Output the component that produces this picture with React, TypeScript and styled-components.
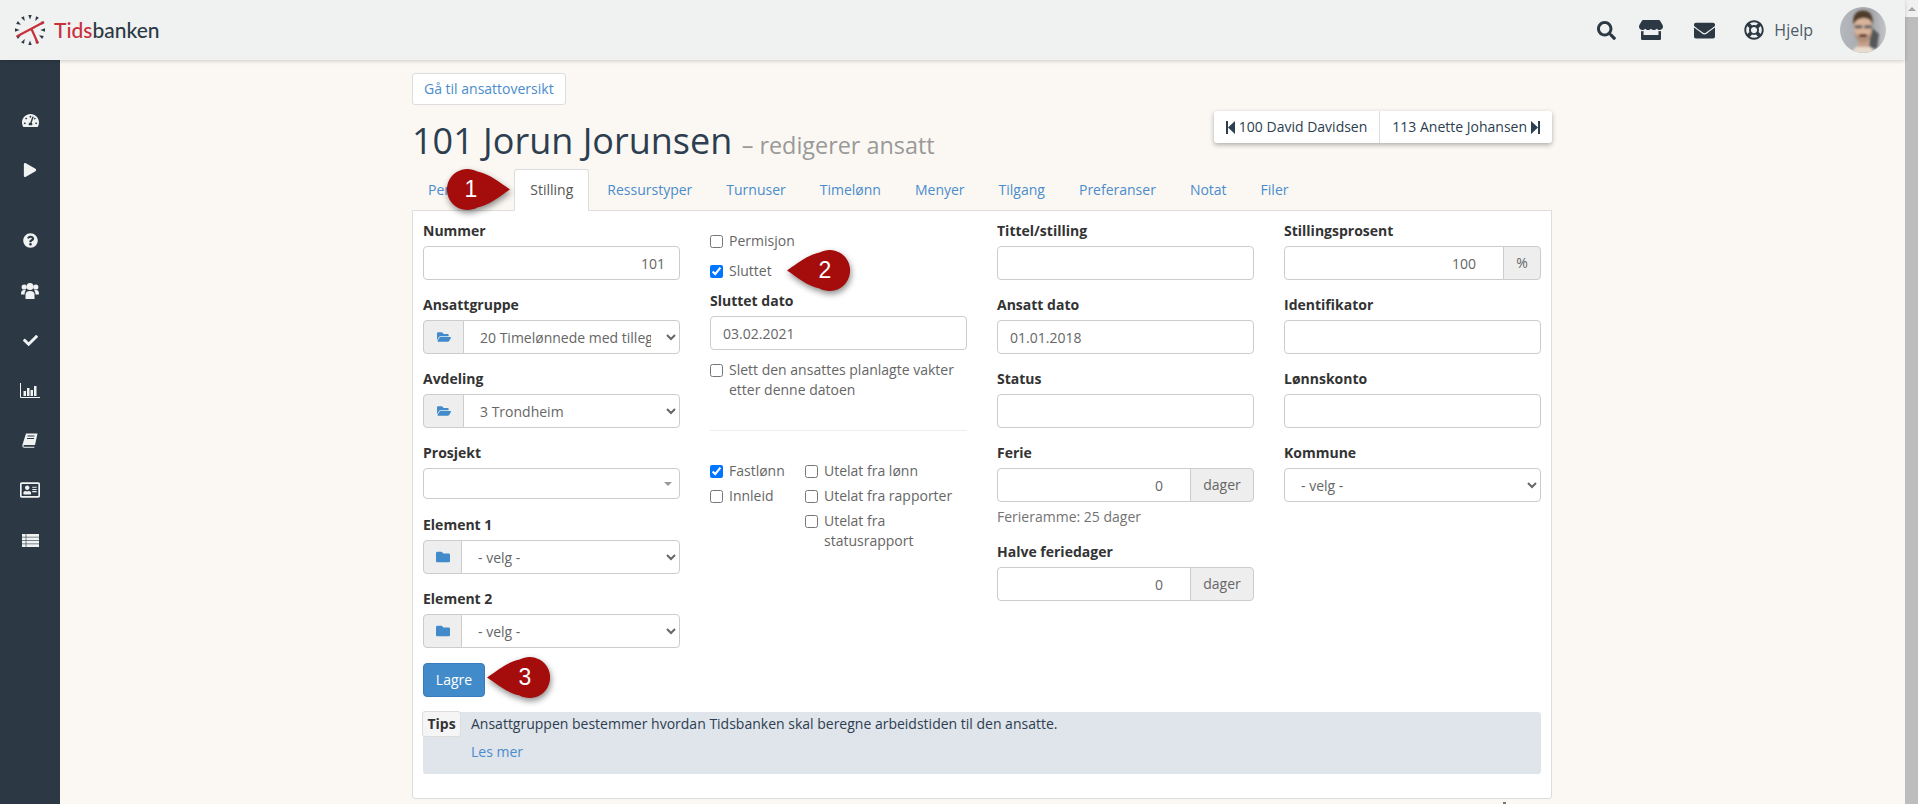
import React from "react";
import styled, { createGlobalStyle } from "styled-components";
import {
  FaCheck,
  FaEnvelope,
  FaFolder,
  FaFolderOpen,
  FaPlay,
  FaQuestionCircle,
  FaRegAddressCard,
  FaRegLifeRing,
  FaSearch,
  FaStore,
  FaTachometerAlt,
} from "react-icons/fa";

const GlobalStyle = createGlobalStyle`
  html, body { margin: 0; padding: 0; height: 100%; overflow: hidden; }
  body {
    font-family: "Open Sans", "Noto Sans", sans-serif;
    font-size: 14px;
    line-height: 20px;
    color: #2c3e50;
    background: #fbf8f3;
  }
  * { box-sizing: border-box; }
`;

const Shell = styled.div`
  display: flex;
  width: 1918px;
  height: 804px;
  overflow: hidden;
`;

const Viewport = styled.div`
  flex: 1;
  min-width: 0;
  display: flex;
  flex-direction: column;
`;

const TopBar = styled.header`
  height: 60px;
  flex: none;
  display: flex;
  align-items: center;
  padding: 0 19px 0 15px;
  background: #f0f2f2;
  box-shadow: 0 1px 4px rgba(0, 0, 0, 0.18);
  position: relative;
  z-index: 2;
`;

const Brand = styled.div`
  display: flex;
  align-items: center;
  gap: 9px;
  flex: 1;
`;

const BrandName = styled.span`
  font-family: Lato, sans-serif;
  font-size: 21px;
  font-weight: 500;
  line-height: 30px;
  color: #2c3944;
  b {
    font-weight: 500;
    color: #c8303c;
  }
`;

const TopIcon = styled.span<{ $gap: number }>`
  display: flex;
  align-items: center;
  margin-right: ${(p) => p.$gap}px;
  color: #2c3944;
`;

const HelpLink = styled.span`
  display: flex;
  align-items: center;
  gap: 10px;
  margin-right: 27px;
  font-size: 16px;
  color: #4f5b66;
  svg {
    font-size: 20px;
    color: #2c3944;
  }
`;

const Body = styled.div`
  flex: 1;
  min-height: 0;
  display: flex;
`;

const SideBar = styled.nav`
  width: 60px;
  flex: none;
  display: flex;
  flex-direction: column;
  align-items: center;
  padding-top: 35px;
  background: #2c3944;
  color: #f1f3f3;
`;

const SideItem = styled.div<{ $space?: boolean }>`
  height: 50px;
  flex: none;
  display: flex;
  align-items: center;
  justify-content: center;
  margin-top: ${(p) => (p.$space ? 20 : 0)}px;
`;

const Content = styled.main`
  flex: 1;
  min-width: 0;
  padding: 13px 0 0 352px;
`;

const Page = styled.div`
  width: 1140px;
  position: relative;
`;

const BackButton = styled.a`
  display: inline-block;
  height: 32px;
  padding: 5px 11px;
  background: #fff;
  border: 1px solid #ddd;
  border-radius: 3px;
  color: #4a8ccc;
`;

const TitleRow = styled.div`
  display: flex;
  justify-content: space-between;
  align-items: flex-start;
  height: 64px;
`;

const Title = styled.h1`
  margin: 14px 0 0;
  font-size: 36px;
  font-weight: 400;
  line-height: 44px;
  color: #2c3e50;
  small {
    font-size: 23.4px;
    color: #999;
  }
`;

const Pager = styled.div`
  display: flex;
  margin-top: 6px;
  height: 32px;
  background: #fff;
  border-radius: 3px;
  box-shadow: 0 2px 5px rgba(0, 0, 0, 0.3);
`;

const PagerItem = styled.span<{ $first?: boolean }>`
  display: flex;
  align-items: center;
  gap: 4px;
  padding: 0 12px;
  border-left: ${(p) => (p.$first ? "none" : "1px solid #ddd")};
  color: #2c3e50;
`;

const Tabs = styled.ul`
  list-style: none;
  display: flex;
  height: 42px;
  margin: 0;
  padding: 0;
  position: relative;
  z-index: 1;
`;

const Tab = styled.li<{ $active?: boolean }>`
  height: 42px;
  padding: 10px 15px;
  margin-right: 2px;
  border: 1px solid ${(p) => (p.$active ? "#ddd" : "transparent")};
  border-bottom-color: ${(p) => (p.$active ? "#fff" : "transparent")};
  border-radius: 3px 3px 0 0;
  background: ${(p) => (p.$active ? "#fff" : "transparent")};
  color: ${(p) => (p.$active ? "#555" : "#4a8ccc")};
`;

const Pane = styled.section`
  margin-top: -1px;
  height: 589px;
  padding: 10px;
  background: #fff;
  border: 1px solid #ddd;
  border-radius: 0 0 3px 3px;
`;

const Columns = styled.div`
  display: grid;
  grid-template-columns: repeat(4, 257px);
  column-gap: 30px;
  height: 442px;
`;

const Column = styled.div`
  display: flex;
  flex-direction: column;
  align-items: stretch;
`;

const Field = styled.div<{ $height?: number }>`
  height: ${(p) => p.$height ?? 74}px;
  flex: none;
`;

const Label = styled.label`
  display: block;
  height: 25px;
  font-weight: 700;
  color: #333;
`;

const Hint = styled.div`
  height: 35px;
  margin-top: -10px;
  color: #737373;
`;

const control = `
  height: 34px;
  width: 100%;
  font: inherit;
  color: #666;
  background: #fff;
  border: 1px solid #ccc;
  border-radius: 4px;
  outline: none;
`;

const TextBox = styled.input<{ $right?: boolean; $spin?: boolean }>`
  ${control}
  padding: 6px ${(p) => (p.$spin ? 27 : 14)}px 6px 12px;
  text-align: ${(p) => (p.$right ? "right" : "left")};
`;

const Picker = styled.select`
  ${control}
  padding: 6px 12px;
`;

const Combo = styled.div`
  ${control}
  height: 31px;
  display: flex;
  align-items: center;
  justify-content: flex-end;
  padding-right: 7px;
  &::after {
    content: "";
    border: 4px solid transparent;
    border-top: 4px solid #999;
    border-bottom: 0;
  }
`;

const Group = styled.div`
  display: flex;
  height: 34px;
  & > input,
  & > select {
    flex: 1;
    min-width: 0;
    border-radius: 0 4px 4px 0;
    margin-left: -1px;
  }
  & > input:first-child {
    margin-left: 0;
    border-radius: 4px 0 0 4px;
    margin-right: -1px;
  }
`;

const Addon = styled.span<{ $width: number; $end?: boolean }>`
  flex: none;
  width: ${(p) => p.$width}px;
  display: flex;
  align-items: center;
  justify-content: center;
  background: #eee;
  border: 1px solid #ccc;
  border-radius: ${(p) => (p.$end ? "0 4px 4px 0" : "4px 0 0 4px")};
  color: #666;
  svg {
    color: #428bca;
    font-size: 14px;
  }
`;

const CheckRow = styled.label<{ $height?: number; $top?: number }>`
  display: flex;
  align-items: flex-start;
  gap: 6px;
  min-height: ${(p) => p.$height ?? 30}px;
  margin-top: ${(p) => p.$top ?? 0}px;
  color: #666;
  input {
    width: 13px;
    height: 13px;
    margin: 4px 0 0;
    flex: none;
    accent-color: #0075ff;
  }
`;

const Divider = styled.hr`
  margin: 30px 0 30px;
  border: 0;
  border-top: 1px solid #eee;
`;

const CheckGrid = styled.div`
  display: flex;
  gap: 16px;
`;

const CheckStack = styled.div<{ $width?: number }>`
  display: flex;
  flex-direction: column;
  width: ${(p) => (p.$width ? `${p.$width}px` : "auto")};
  flex: ${(p) => (p.$width ? "none" : 1)};
  ${CheckRow} {
    min-height: 25px;
  }
`;

const SaveButton = styled.button`
  display: block;
  width: 62px;
  height: 34px;
  font: inherit;
  color: #fff;
  background: #428bca;
  border: 1px solid #357ebd;
  border-radius: 4px;
`;

const TipBox = styled.div`
  display: flex;
  height: 62px;
  margin-top: 15px;
  background: #e0e4eb;
  border-radius: 3px;
`;

const TipTag = styled.b`
  flex: none;
  width: 39px;
  height: 26px;
  margin: -1px 0 0 -1px;
  text-align: center;
  line-height: 24px;
  color: #333;
  background: #f5f5f5;
  border: 1px solid #ddd;
  border-radius: 3px;
`;

const TipText = styled.div`
  padding: 2px 0 0 10px;
  color: #2c3e50;
  a {
    display: block;
    margin-top: 8px;
    color: #4a8ccc;
  }
`;

const PageMark = styled.div`
  width: 3px;
  height: 2px;
  margin: 3px 0 0 1091px;
  background: #777;
`;

const Bubble = styled.div<{ $x: number; $y: number }>`
  position: absolute;
  left: ${(p) => p.$x}px;
  top: ${(p) => p.$y}px;
  width: 63px;
  height: 41px;
  z-index: 3;
  svg {
    display: block;
    overflow: visible;
    filter: drop-shadow(1px 3px 3px rgba(0, 0, 0, 0.45));
  }
  span {
    position: absolute;
    top: 0;
    height: 41px;
    width: 24px;
    font: 23px/41px "Liberation Sans", Arial, sans-serif;
    text-align: center;
    color: #fff;
  }
`;

const BubbleRight = styled(Bubble)`
  span {
    left: 12px;
  }
`;

const BubbleLeft = styled(Bubble)`
  span {
    left: 26px;
  }
`;

const ScrollTrack = styled.aside`
  width: 13px;
  flex: none;
  display: flex;
  flex-direction: column;
  background: #f1f1f1;
`;

const ScrollArrow = styled.div`
  height: 17px;
  flex: none;
  display: flex;
  align-items: center;
  justify-content: center;
  &::before {
    content: "";
    border: 4px solid transparent;
    border-bottom: 4px solid #a3a3a3;
    border-top: 0;
  }
`;

const ScrollThumb = styled.div`
  flex: 1;
  background: #bdbdbd;
`;

function Logo() {
  const ticks = Array.from({ length: 12 }, (_, i) => i * 30);
  return (
    <svg width="30" height="30" viewBox="0 0 30 30">
      {ticks.map((a) => (
        <polygon key={a} points="13.3,0 16.7,0 15,4.6" fill="#2c3944" transform={`rotate(${a} 15 15)`} />
      ))}
      <path d="M1.700 21.500 L29 7 M16.500 14 L23 28.500" stroke="#c8303c" strokeWidth="2.200" fill="none" />
    </svg>
  );
}

function Avatar() {
  return (
    <svg width="46" height="46" viewBox="0 0 46 46">
      <defs>
        <clipPath id="avatar-clip">
          <circle cx="23" cy="23" r="23" />
        </clipPath>
        <linearGradient id="avatar-bg" x1="0" x2="1" y1="0" y2="0">
          <stop offset="0" stopColor="#b4b7bb" />
          <stop offset="0.7" stopColor="#a4a7ab" />
          <stop offset="1" stopColor="#c4c5c7" />
        </linearGradient>
        <filter id="avatar-soft">
          <feGaussianBlur stdDeviation="1" />
        </filter>
      </defs>
      <g clipPath="url(#avatar-clip)">
        <rect width="46" height="46" fill="url(#avatar-bg)" />
        <g filter="url(#avatar-soft)">
          <path d="M31 20 L39 27 L37 41 L29 42 Z" fill="#55575a" />
          <path d="M10 47 Q15 38 23 38 Q32 38 36 47 Z" fill="#e8dacd" />
          <rect x="18" y="30" width="11" height="10" fill="#c9a28b" />
          <ellipse cx="23" cy="21" rx="9" ry="14.500" fill="#d9b39a" />
          <path d="M13.500 18 Q11.500 4 23 3.500 Q34 4 32.500 18 Q31 11 24 11 Q16 11 13.500 18 Z" fill="#4f3c2b" />
          <path d="M14.500 25 Q15 35 23 36 Q31 35 31.500 25 Q28 30 23 29 Q18 30 14.500 25 Z" fill="#b1907a" />
          <rect x="14.500" y="18" width="8" height="3.500" rx="1.500" fill="#6d6866" />
          <rect x="24" y="18" width="8" height="3.500" rx="1.500" fill="#6d6866" />
          <rect x="19" y="27" width="8" height="3" rx="1.500" fill="#5d2f2a" />
        </g>
      </g>
    </svg>
  );
}

function UsersIcon() {
  return (
    <svg width="18" height="17" viewBox="0 0 18 17" fill="currentColor">
      <circle cx="9" cy="4.500" r="3.500" />
      <circle cx="3.200" cy="5" r="2.600" />
      <circle cx="14.800" cy="5" r="2.600" />
      <path d="M4.500 17 V12.500 Q4.500 9 9 9 Q13.500 9 13.500 12.500 V17 Z" />
      <path d="M0 12 Q0 8 3 8 L5 8.300 Q3.500 9.500 3.500 12.500 H1 Q0 12.500 0 12 Z" />
      <path d="M18 12 Q18 8 15 8 L13 8.300 Q14.500 9.500 14.500 12.500 H17 Q18 12.500 18 12 Z" />
    </svg>
  );
}

function ChartIcon() {
  return (
    <svg width="20" height="15" viewBox="0 0 20 15" fill="currentColor">
      <path d="M0.500 0 V14.500 H20" fill="none" stroke="currentColor" />
      <rect x="3.500" y="8" width="2.500" height="5" />
      <rect x="7" y="5" width="2.500" height="8" />
      <rect x="10.500" y="7" width="2.500" height="6" />
      <rect x="14" y="3" width="2.500" height="10" />
    </svg>
  );
}

function BookIcon() {
  return (
    <svg width="16" height="15" viewBox="0 0 16 15">
      <path
        d="M4 0.500 H15.500 L13 12 H2.500 Q1.500 12 1.300 13 Q1.300 13.800 2.500 13.800 H12.500 L12.200 14.800 H2 Q0 14.600 0.300 12.300 Z"
        fill="currentColor"
      />
      <path d="M5.500 3 H12.500 M5 5.500 H12" stroke="#2c3944" strokeWidth="1" />
    </svg>
  );
}

function RowsIcon() {
  return (
    <svg width="17" height="13" viewBox="0 0 17 13" fill="currentColor">
      <rect y="0" width="17" height="2.800" />
      <rect y="3.400" width="17" height="2.800" />
      <rect y="6.800" width="17" height="2.800" />
      <rect y="10.200" width="17" height="2.800" />
      <path d="M4 0 V13" stroke="#2c3944" strokeWidth="0.600" />
    </svg>
  );
}

function StepIcon({ forward }: { forward?: boolean }) {
  return (
    <svg width="9" height="13" viewBox="0 0 9 13" fill="currentColor">
      {forward ? <path d="M0 0 L7 6.500 L0 13 Z M7 0 H9 V13 H7 Z" /> : <path d="M9 0 L2 6.500 L9 13 Z M0 0 H2 V13 H0 Z" />}
    </svg>
  );
}

const teardrop = "M0 20.500 C10 14 20 5 32.600 2.600 A20.500 20.500 0 1 1 32.600 38.400 C20 36 10 27 0 20.500 Z";

function Callout({ side, x, y, n }: { side: "left" | "right"; x: number; y: number; n: number }) {
  if (side === "left") {
    return (
      <BubbleLeft $x={x} $y={y}>
        <svg width="63" height="41" viewBox="0 0 63 41">
          <path d={teardrop} fill="#a50c0c" />
        </svg>
        <span>{n}</span>
      </BubbleLeft>
    );
  }
  return (
    <BubbleRight $x={x} $y={y}>
      <svg width="63" height="41" viewBox="0 0 63 41">
        <path d={teardrop} fill="#a50c0c" transform="translate(63 0) scale(-1 1)" />
      </svg>
      <span>{n}</span>
    </BubbleRight>
  );
}

const tabs = ["Personalia", "Stilling", "Ressurstyper", "Turnuser", "Timelønn", "Menyer", "Tilgang", "Preferanser", "Notat", "Filer"];

export default function App() {
  return (
    <Shell>
      <GlobalStyle />
      <Viewport>
        <TopBar>
          <Brand>
            <Logo />
            <BrandName>
              <b>Tids</b>banken
            </BrandName>
          </Brand>
          <TopIcon $gap={23}>
            <FaSearch size={19} />
          </TopIcon>
          <TopIcon $gap={31}>
            <FaStore size={24} />
          </TopIcon>
          <TopIcon $gap={29}>
            <FaEnvelope size={21} />
          </TopIcon>
          <HelpLink>
            <FaRegLifeRing />
            Hjelp
          </HelpLink>
          <Avatar />
        </TopBar>
        <Body>
          <SideBar>
            <SideItem><FaTachometerAlt size={17} /></SideItem>
            <SideItem><FaPlay size={14} /></SideItem>
            <SideItem $space><FaQuestionCircle size={15} /></SideItem>
            <SideItem><UsersIcon /></SideItem>
            <SideItem><FaCheck size={15} /></SideItem>
            <SideItem><ChartIcon /></SideItem>
            <SideItem><BookIcon /></SideItem>
            <SideItem><FaRegAddressCard size={20} /></SideItem>
            <SideItem><RowsIcon /></SideItem>
          </SideBar>
          <Content>
            <Page>
              <BackButton>Gå til ansattoversikt</BackButton>
              <TitleRow>
                <Title>
                  101 Jorun Jorunsen <small>– redigerer ansatt</small>
                </Title>
                <Pager>
                  <PagerItem $first>
                    <StepIcon />
                    100 David Davidsen
                  </PagerItem>
                  <PagerItem>
                    113 Anette Johansen
                    <StepIcon forward />
                  </PagerItem>
                </Pager>
              </TitleRow>
              <Tabs>
                {tabs.map((t) => (
                  <Tab key={t} $active={t === "Stilling"}>{t}</Tab>
                ))}
              </Tabs>
              <Pane>
                <Columns>
                  <Column>
                    <Field>
                      <Label>Nummer</Label>
                      <TextBox $right defaultValue="101" />
                    </Field>
                    <Field>
                      <Label>Ansattgruppe</Label>
                      <Group>
                        <Addon $width={41}><FaFolderOpen /></Addon>
                        <Picker defaultValue="20">
                          <option value="20">20 Timelønnede med tillegg</option>
                        </Picker>
                      </Group>
                    </Field>
                    <Field>
                      <Label>Avdeling</Label>
                      <Group>
                        <Addon $width={41}><FaFolderOpen /></Addon>
                        <Picker defaultValue="3">
                          <option value="3">3 Trondheim</option>
                        </Picker>
                      </Group>
                    </Field>
                    <Field $height={72}>
                      <Label>Prosjekt</Label>
                      <Combo />
                    </Field>
                    <Field>
                      <Label>Element 1</Label>
                      <Group>
                        <Addon $width={39}><FaFolder /></Addon>
                        <Picker>
                          <option>- velg -</option>
                        </Picker>
                      </Group>
                    </Field>
                    <Field>
                      <Label>Element 2</Label>
                      <Group>
                        <Addon $width={39}><FaFolder /></Addon>
                        <Picker>
                          <option>- velg -</option>
                        </Picker>
                      </Group>
                    </Field>
                  </Column>
                  <Column>
                    <CheckRow $top={10}>
                      <input type="checkbox" />
                      Permisjon
                    </CheckRow>
                    <CheckRow>
                      <input type="checkbox" defaultChecked />
                      Sluttet
                    </CheckRow>
                    <Field $height={69}>
                      <Label>Sluttet dato</Label>
                      <TextBox defaultValue="03.02.2021" />
                    </Field>
                    <CheckRow $height={40}>
                      <input type="checkbox" />
                      <span>Slett den ansattes planlagte vakter etter denne datoen</span>
                    </CheckRow>
                    <Divider />
                    <CheckGrid>
                      <CheckStack $width={79}>
                        <CheckRow>
                          <input type="checkbox" defaultChecked />
                          Fastlønn
                        </CheckRow>
                        <CheckRow>
                          <input type="checkbox" />
                          Innleid
                        </CheckRow>
                      </CheckStack>
                      <CheckStack>
                        <CheckRow>
                          <input type="checkbox" />
                          Utelat fra lønn
                        </CheckRow>
                        <CheckRow>
                          <input type="checkbox" />
                          Utelat fra rapporter
                        </CheckRow>
                        <CheckRow>
                          <input type="checkbox" />
                          <span>Utelat fra statusrapport</span>
                        </CheckRow>
                      </CheckStack>
                    </CheckGrid>
                  </Column>
                  <Column>
                    <Field>
                      <Label>Tittel/stilling</Label>
                      <TextBox />
                    </Field>
                    <Field>
                      <Label>Ansatt dato</Label>
                      <TextBox defaultValue="01.01.2018" />
                    </Field>
                    <Field>
                      <Label>Status</Label>
                      <TextBox />
                    </Field>
                    <Field>
                      <Label>Ferie</Label>
                      <Group>
                        <TextBox $right $spin defaultValue="0" />
                        <Addon $width={64} $end>dager</Addon>
                      </Group>
                    </Field>
                    <Hint>Ferieramme: 25 dager</Hint>
                    <Field>
                      <Label>Halve feriedager</Label>
                      <Group>
                        <TextBox $right $spin defaultValue="0" />
                        <Addon $width={64} $end>dager</Addon>
                      </Group>
                    </Field>
                  </Column>
                  <Column>
                    <Field>
                      <Label>Stillingsprosent</Label>
                      <Group>
                        <TextBox $right $spin defaultValue="100" />
                        <Addon $width={38} $end>%</Addon>
                      </Group>
                    </Field>
                    <Field>
                      <Label>Identifikator</Label>
                      <TextBox />
                    </Field>
                    <Field>
                      <Label>Lønnskonto</Label>
                      <TextBox />
                    </Field>
                    <Field>
                      <Label>Kommune</Label>
                      <Picker>
                        <option>- velg -</option>
                      </Picker>
                    </Field>
                  </Column>
                </Columns>
                <SaveButton>Lagre</SaveButton>
                <TipBox>
                  <TipTag>Tips</TipTag>
                  <TipText>
                    Ansattgruppen bestemmer hvordan Tidsbanken skal beregne arbeidstiden til den ansatte.
                    <a>Les mer</a>
                  </TipText>
                </TipBox>
              </Pane>
              <PageMark />
              <Callout side="right" x={35} y={96} n={1} />
              <Callout side="left" x={375} y={177} n={2} />
              <Callout side="left" x={75} y={584} n={3} />
            </Page>
          </Content>
        </Body>
      </Viewport>
      <ScrollTrack>
        <ScrollArrow />
        <ScrollThumb />
      </ScrollTrack>
    </Shell>
  );
}
